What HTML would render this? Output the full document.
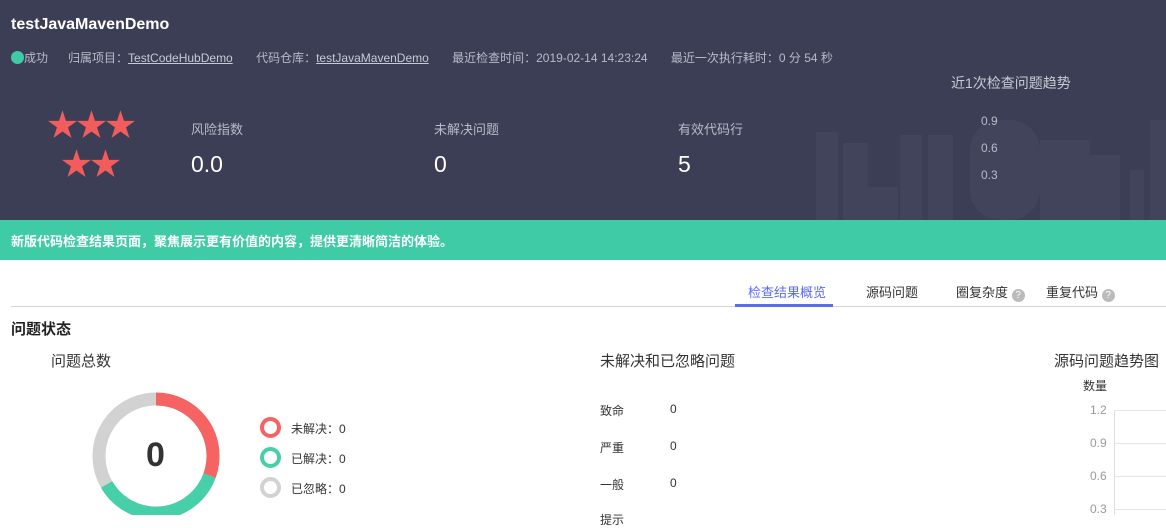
<!DOCTYPE html>
<html><head><meta charset="utf-8"><style>
*{margin:0;padding:0;box-sizing:border-box}
body{width:1166px;height:515px;overflow:hidden;background:#fff;font-family:"Liberation Sans","Noto Sans CJK SC",sans-serif;position:relative}
.a{position:absolute;white-space:nowrap}
.hdr{position:absolute;left:0;top:0;width:1166px;height:220px;background:#3b3e55}
.meta{color:#b8bbc8;font-size:12px}
.meta u{color:#c8cad4}
.lbl{color:#b8bbc8;font-size:13px}
.val{color:#fff;font-size:23px}
.star{color:#f25c5c;font-size:31px;line-height:1;letter-spacing:-2px}
.k{font-size:12px;color:#333}
</style></head><body>
<div class="hdr">
<svg class="a" style="left:810px;top:100px" width="356" height="120">
<g fill="#41445a">
<rect x="6" y="32" width="22" height="88"/><rect x="33" y="43" width="25" height="77"/><rect x="58" y="87" width="30" height="33"/><rect x="90" y="35" width="22" height="85"/><rect x="118" y="35" width="25" height="85"/><rect x="160" y="20" width="70" height="100" rx="30"/><rect x="230" y="40" width="50" height="80"/><rect x="280" y="55" width="30" height="65"/><rect x="320" y="70" width="14" height="50"/><rect x="340" y="20" width="16" height="100"/>
</g></svg>
<div class="a" style="left:11px;top:16px;color:#fff;font-size:16px;font-weight:bold">testJavaMavenDemo</div>
<div class="a meta" style="left:11px;top:49px"><span style="display:inline-block;width:13px;height:13px;border-radius:50%;background:#3ecba6;vertical-align:-2px"></span>成功&nbsp;&nbsp;&nbsp;&nbsp;&nbsp;&nbsp;归属项目：<u>TestCodeHubDemo</u>&nbsp;&nbsp;&nbsp;&nbsp;&nbsp;&nbsp;&nbsp;代码仓库：<u>testJavaMavenDemo</u>&nbsp;&nbsp;&nbsp;&nbsp;&nbsp;&nbsp;&nbsp;最近检查时间：2019-02-14 14:23:24&nbsp;&nbsp;&nbsp;&nbsp;&nbsp;&nbsp;&nbsp;最近一次执行耗时：0 分 54 秒</div>
<div class="a star" style="left:47px;top:110px">★★★</div>
<div class="a star" style="left:61px;top:149px">★★</div>
<div class="a lbl" style="left:191px;top:119px">风险指数</div>
<div class="a val" style="left:191px;top:151px">0.0</div>
<div class="a lbl" style="left:434px;top:119px">未解决问题</div>
<div class="a val" style="left:434px;top:151px">0</div>
<div class="a lbl" style="left:678px;top:119px">有效代码行</div>
<div class="a val" style="left:678px;top:151px">5</div>
<div class="a" style="left:951px;top:73px;color:#c8cad4;font-size:14px">近1次检查问题趋势</div>
<div class="a meta" style="left:981px;top:114px">0.9</div>
<div class="a meta" style="left:981px;top:141px">0.6</div>
<div class="a meta" style="left:981px;top:168px">0.3</div>
</div>
<div class="a" style="left:0;top:220px;width:1166px;height:40px;background:#3ecba6"></div>
<div class="a" style="left:11px;top:231px;color:#fff;font-size:13px;font-weight:bold">新版代码检查结果页面，聚焦展示更有价值的内容，提供更清晰简洁的体验。</div>
<div class="a" style="left:11px;top:306px;width:1155px;height:1px;background:#d5d5d5"></div>
<div class="a" style="left:735px;top:304px;width:98px;height:3px;background:#5a6bf5"></div>
<div class="a" style="left:748px;top:282px;font-size:13px;color:#5a6bf5">检查结果概览</div>
<div class="a" style="left:866px;top:282px;font-size:13px;color:#333">源码问题</div>
<div class="a" style="left:956px;top:282px;font-size:13px;color:#333">圈复杂度 <span style="display:inline-block;width:13px;height:13px;border-radius:50%;background:#bbb;color:#fff;font-size:10px;text-align:center;line-height:13px;vertical-align:-1px">?</span></div>
<div class="a" style="left:1046px;top:282px;font-size:13px;color:#333">重复代码 <span style="display:inline-block;width:13px;height:13px;border-radius:50%;background:#bbb;color:#fff;font-size:10px;text-align:center;line-height:13px;vertical-align:-1px">?</span></div>
<div class="a" style="left:11px;top:318px;font-size:15px;font-weight:bold;color:#222">问题状态</div>
<div class="a" style="left:51px;top:350px;font-size:15px;color:#333">问题总数</div>
<div class="a" style="left:600px;top:350px;font-size:15px;color:#333">未解决和已忽略问题</div>
<div class="a" style="left:1054px;top:350px;font-size:15px;color:#333">源码问题趋势图</div>
<svg class="a" style="left:86px;top:390px" width="140" height="125">
<g fill="none" stroke-width="13" transform="translate(70,66)">
<circle r="57" stroke="#d2d2d2"/>
<path d="M0,-57 A57,57 0 0 1 53.6,19.5" stroke="#f56363"/>
<path d="M53.6,19.5 A57,57 0 0 1 -49.4,28.5" stroke="#47cfaa"/>
</g></svg>
<div class="a" style="left:146px;top:436px;font-size:34px;font-weight:bold;color:#333">0</div>
<div class="a" style="left:260px;top:417px;width:21px;height:21px;border-radius:50%;border:4px solid #f56363"></div>
<div class="a" style="left:260px;top:447px;width:21px;height:21px;border-radius:50%;border:4px solid #47cfaa"></div>
<div class="a" style="left:260px;top:477px;width:21px;height:21px;border-radius:50%;border:4px solid #d2d2d2"></div>
<div class="a k" style="left:291px;top:420px">未解决：0</div>
<div class="a k" style="left:291px;top:450px">已解决：0</div>
<div class="a k" style="left:291px;top:480px">已忽略：0</div>
<div class="a k" style="left:600px;top:402px">致命</div><div class="a k" style="left:670px;top:402px">0</div>
<div class="a k" style="left:600px;top:439px">严重</div><div class="a k" style="left:670px;top:439px">0</div>
<div class="a k" style="left:600px;top:476px">一般</div><div class="a k" style="left:670px;top:476px">0</div>
<div class="a k" style="left:600px;top:511px">提示</div>
<div class="a k" style="left:1083px;top:377px">数量</div>
<div class="a" style="left:1090px;top:403px;font-size:12px;color:#999">1.2</div>
<div class="a" style="left:1090px;top:436px;font-size:12px;color:#999">0.9</div>
<div class="a" style="left:1090px;top:469px;font-size:12px;color:#999">0.6</div>
<div class="a" style="left:1090px;top:502px;font-size:12px;color:#999">0.3</div>
<div class="a" style="left:1114px;top:410px;width:1px;height:105px;background:#ddd"></div>
<div class="a" style="left:1114px;top:410px;width:52px;height:1px;background:#e5e5e5"></div>
<div class="a" style="left:1114px;top:443px;width:52px;height:1px;background:#e5e5e5"></div>
<div class="a" style="left:1114px;top:476px;width:52px;height:1px;background:#e5e5e5"></div>
<div class="a" style="left:1114px;top:509px;width:52px;height:1px;background:#e5e5e5"></div>
</body></html>
